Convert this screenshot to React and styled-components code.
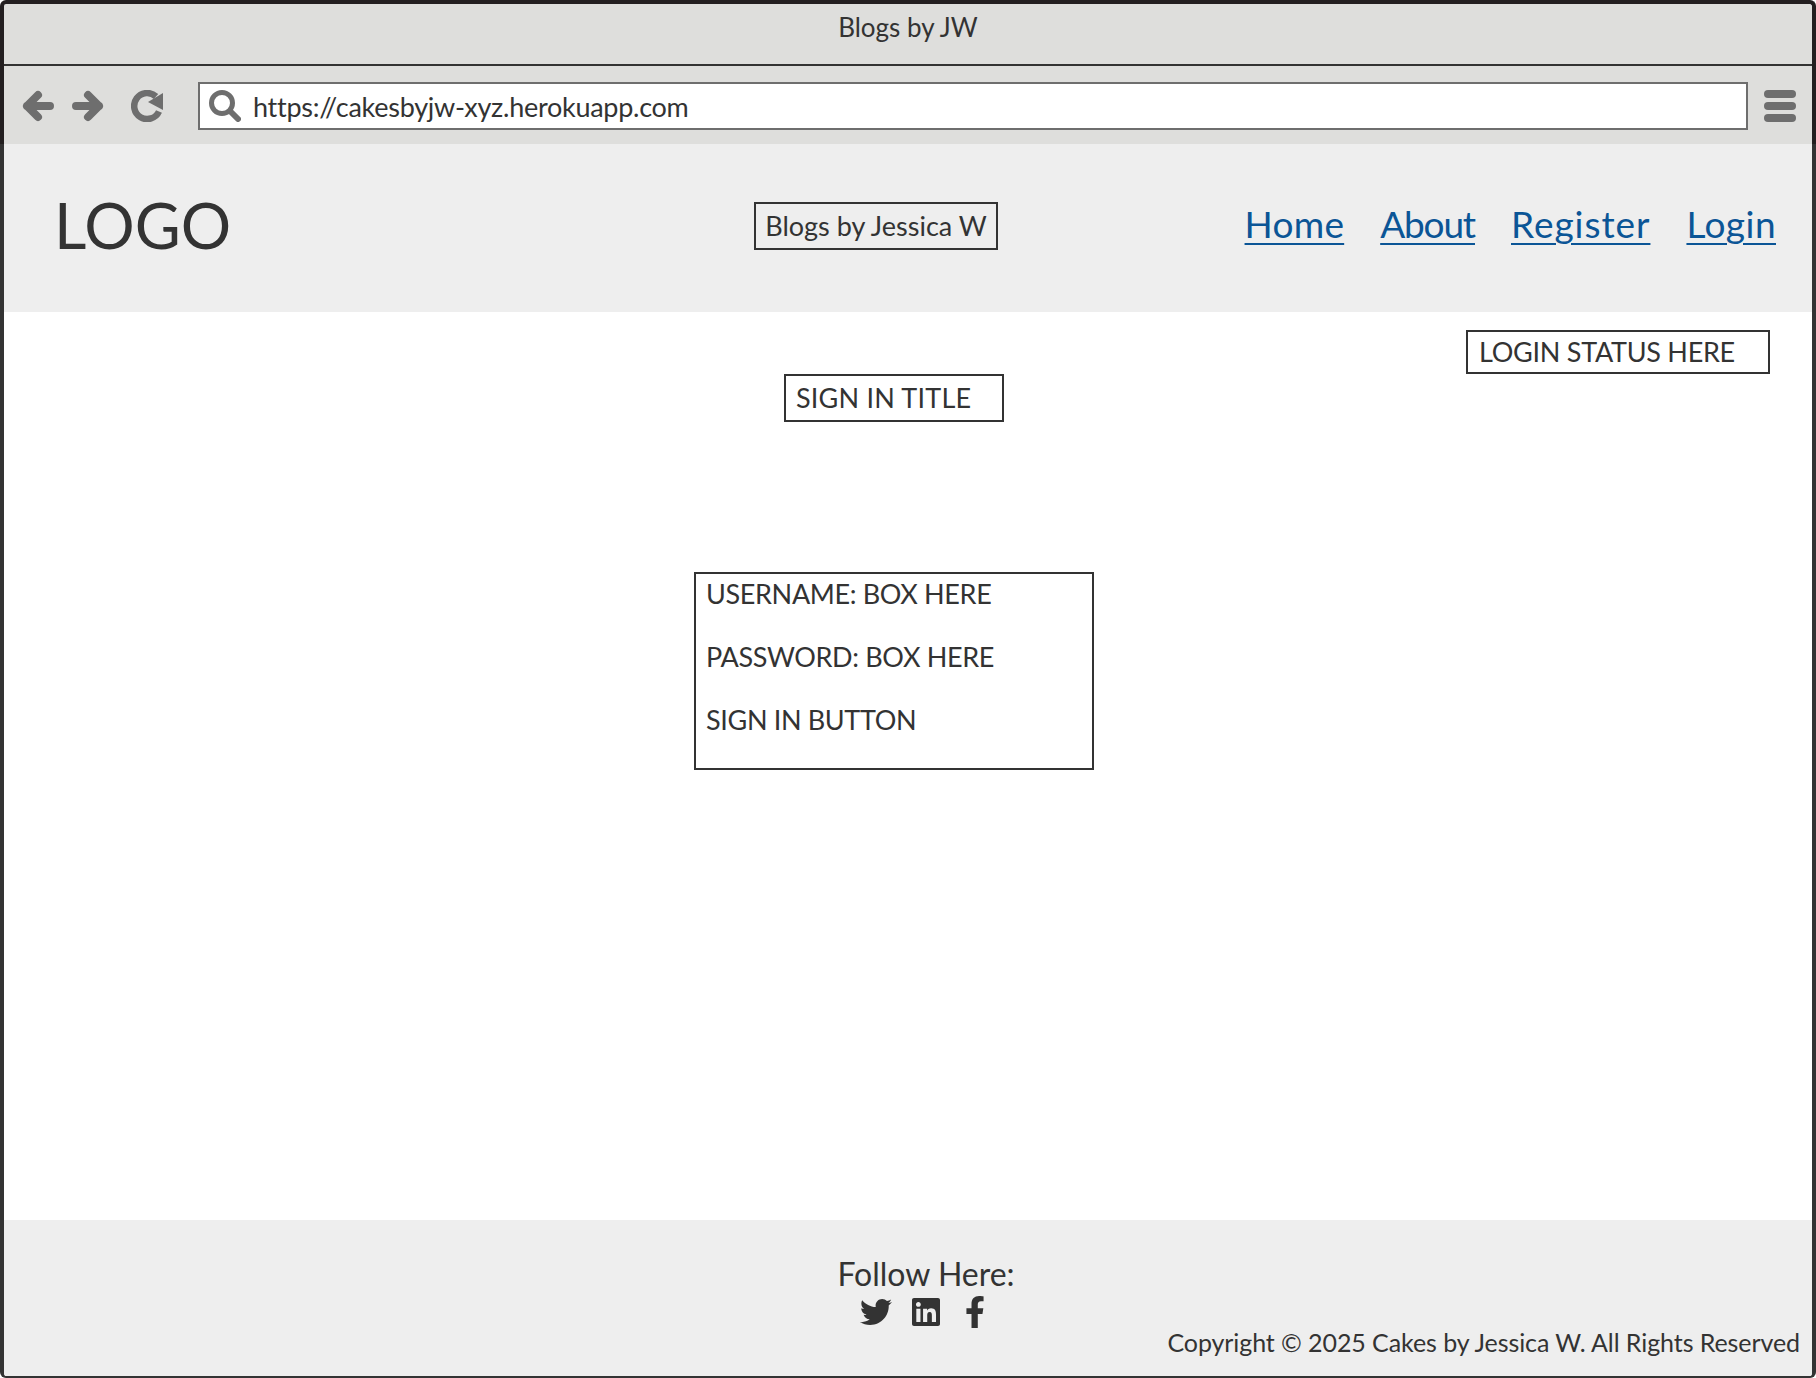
import React from "react";
import styled, { createGlobalStyle } from "styled-components";
import { FaTwitter, FaLinkedin, FaFacebookF } from "react-icons/fa";

const Global = createGlobalStyle`
  html, body {
    margin: 0;
    padding: 0;
    background: #fff;
  }
  body {
    font-family: "Lato", "Noto Sans", sans-serif;
    color: #333;
  }
  * { box-sizing: border-box; }
`;

const Page = styled.div`
  width: 1816px;
  height: 1378px;
  display: flex;
  flex-direction: column;
  overflow: hidden;
`;

const Chrome = styled.div`
  height: 144px;
  flex: none;
  display: flex;
  flex-direction: column;
  background: #dededc;
  border: 4px solid #231f20;
  border-bottom: none;
  border-radius: 6px 6px 0 0;
`;

const TitleBar = styled.div`
  height: 62px;
  flex: none;
  display: flex;
  justify-content: center;
  padding-top: 7px;
  font-size: 26px;
  line-height: 32px;
  border-bottom: 2px solid #333;
`;

const Toolbar = styled.div`
  flex: 1;
  display: flex;
  align-items: center;
  padding: 2px 12px 0 18px;
`;

const NavIcon = styled.svg`
  width: 32px;
  height: 32px;
  flex: none;
  margin-right: ${({ $gap }) => $gap}px;
  color: #6e6e6e;
`;

const UrlBox = styled.div`
  width: 1550px;
  height: 48px;
  flex: none;
  display: flex;
  align-items: center;
  gap: 12px;
  padding-left: 9px;
  background: #fff;
  border: 2px solid #6e6e6e;
`;

const UrlText = styled.span`
  font-size: 27px;
  letter-spacing: -0.27px;
`;

const Burger = styled.div`
  width: 32px;
  margin-left: 16px;
  display: flex;
  flex-direction: column;
  gap: 4px;
  span {
    height: 8px;
    border-radius: 4px;
    background: #6e6e6e;
  }
`;

const Body = styled.div`
  flex: 1;
  min-height: 0;
  display: flex;
  flex-direction: column;
  border-left: 4px solid #333;
  border-right: 4px solid #333;
  border-bottom: 2px solid #333;
  border-radius: 0 0 6px 6px;
  overflow: hidden;
`;

const Header = styled.header`
  height: 168px;
  flex: none;
  display: flex;
  align-items: center;
  padding: 0 36px 5px 50px;
  background: #eee;
`;

const Logo = styled.div`
  width: 700px;
  flex: none;
  font-size: 63px;
  line-height: 1;
  margin-bottom: 2px;
`;

const SiteName = styled.div`
  width: 244px;
  height: 48px;
  flex: none;
  display: flex;
  align-items: center;
  justify-content: center;
  font-size: 27px;
  border: 2px solid #333;
`;

const Nav = styled.nav`
  margin-left: auto;
  margin-bottom: 3px;
  display: flex;
  gap: 36px;
`;

const NavLink = styled.a`
  font-size: 37px;
  line-height: 44px;
  letter-spacing: ${({ $spacing }) => $spacing}px;
  color: #0b5596;
  text-decoration: underline;
  text-decoration-thickness: 2px;
  text-underline-offset: 5px;
`;

const Main = styled.main`
  flex: 1;
  min-height: 0;
  display: flex;
  flex-direction: column;
  align-items: center;
  padding: 18px 28px 0 0;
  background: #fff;
`;

const Outline = styled.div`
  border: 2px solid #333;
  font-size: 27px;
`;

const StatusBox = styled(Outline)`
  align-self: flex-end;
  width: 304px;
  height: 44px;
  margin-right: 14px;
  padding-left: 11px;
  line-height: 40px;
  letter-spacing: -0.27px;
`;

const SignInTitle = styled(Outline)`
  width: 220px;
  height: 48px;
  padding-left: 10px;
  line-height: 44px;
  letter-spacing: 0.2px;
`;

const SignInForm = styled(Outline)`
  width: 400px;
  height: 198px;
  margin-top: 150px;
  padding: 4px 0 0 10px;
  line-height: 31.5px;
  letter-spacing: -0.35px;
  p {
    margin: 0 0 31.5px;
  }
`;

const Footer = styled.footer`
  height: 156px;
  flex: none;
  display: flex;
  flex-direction: column;
  padding: 35px 12px 0 48px;
  background: #eee;
`;

const FollowLabel = styled.div`
  align-self: center;
  font-size: 32px;
  line-height: 38px;
`;

const SocialRow = styled.div`
  align-self: center;
  margin-top: 3px;
  margin-right: 1px;
  display: flex;
  align-items: center;
  gap: 17.5px;
  height: 32px;
  svg { display: block; }
`;

const Copyright = styled.div`
  align-self: flex-end;
  font-size: 25px;
  line-height: 28px;
  letter-spacing: -0.08px;
`;

const links = [
  { label: "Home", spacing: 0.25 },
  { label: "About", spacing: -1.15 },
  { label: "Register", spacing: 0.95 },
  { label: "Login", spacing: 0.45 },
];

export default function App() {
  return (
    <Page>
      <Global />
      <Chrome>
        <TitleBar>Blogs by JW</TitleBar>
        <Toolbar>
          <NavIcon $gap={18} viewBox="0 0 32 32" fill="none" stroke="currentColor" strokeWidth="8" strokeLinecap="round" strokeLinejoin="round">
            <path d="M28 16H5M16 5 5 16l11 11" />
          </NavIcon>
          <NavIcon $gap={27} viewBox="0 0 32 32" fill="none" stroke="currentColor" strokeWidth="8" strokeLinecap="round" strokeLinejoin="round">
            <path d="M4 16h23M16 5l11 11-11 11" />
          </NavIcon>
          <NavIcon $gap={35} viewBox="0 0 32 32" fill="none">
            <path d="M25 6.5A13 13 0 1 0 28 21.5" stroke="currentColor" strokeWidth="6.5" />
            <path d="M32 3v17L17 12z" fill="currentColor" />
          </NavIcon>
          <UrlBox>
            <svg width="32" height="32" viewBox="0 0 32 32" fill="none" stroke="#6e6e6e" strokeLinecap="round">
              <circle cx="13" cy="13" r="10.5" strokeWidth="5" />
              <path d="M21 21l8 8" strokeWidth="6" />
            </svg>
            <UrlText>https://cakesbyjw-xyz.herokuapp.com</UrlText>
          </UrlBox>
          <Burger>
            <span />
            <span />
            <span />
          </Burger>
        </Toolbar>
      </Chrome>
      <Body>
        <Header>
          <Logo>LOGO</Logo>
          <SiteName>Blogs by Jessica W</SiteName>
          <Nav>
            {links.map((link) => (
              <NavLink key={link.label} $spacing={link.spacing}>{link.label}</NavLink>
            ))}
          </Nav>
        </Header>
        <Main>
          <StatusBox>LOGIN STATUS HERE</StatusBox>
          <SignInTitle>SIGN IN TITLE</SignInTitle>
          <SignInForm>
            <p>USERNAME: BOX HERE</p>
            <p>PASSWORD: BOX HERE</p>
            <p>SIGN IN BUTTON</p>
          </SignInForm>
        </Main>
        <Footer>
          <FollowLabel>Follow Here:</FollowLabel>
          <SocialRow>
            <FaTwitter size={32} />
            <FaLinkedin size={32} />
            <FaFacebookF size={32} />
          </SocialRow>
          <Copyright>Copyright © 2025 Cakes by Jessica W. All Rights Reserved</Copyright>
        </Footer>
      </Body>
    </Page>
  );
}
